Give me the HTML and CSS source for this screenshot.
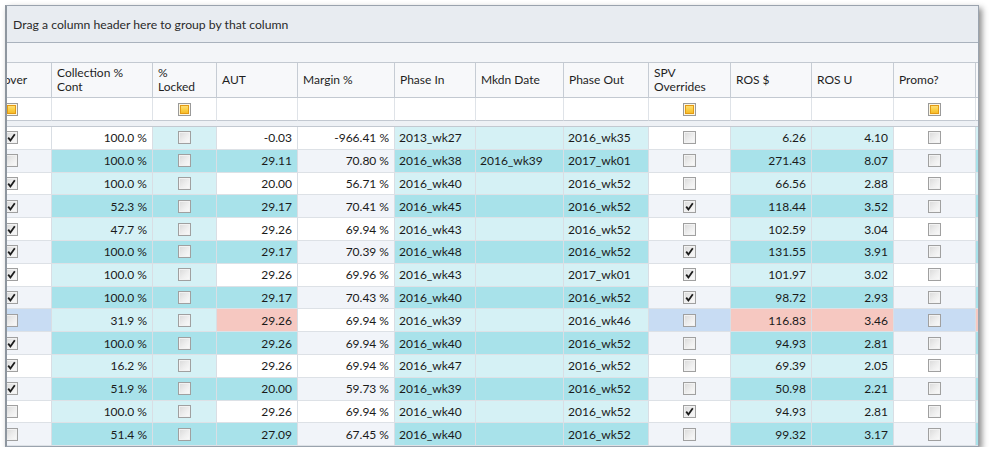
FILE: index.html
```
<!DOCTYPE html>
<html>
<head>
<meta charset="utf-8">
<link rel="stylesheet" href="styles.css">
</head>
<body>
<div class="win">
  <div class="group-panel">Drag a column header here to group by that column</div>
  <div class="strip"></div>
  <div class="row head">
    <div class="h c0"><div class="c0i txt">Carryover</div></div>
    <div class="h">Collection %<br>Cont</div>
    <div class="h">%<br>Locked</div>
    <div class="h">AUT</div>
    <div class="h">Margin %</div>
    <div class="h">Phase In</div>
    <div class="h">Mkdn Date</div>
    <div class="h">Phase Out</div>
    <div class="h">SPV<br>Overrides</div>
    <div class="h">ROS $</div>
    <div class="h">ROS U</div>
    <div class="h">Promo?</div>
    <div class="h last"></div>
  </div>
  <div class="row filter">
    <div class="f c0"><div class="c0i"><span class="cb ind"></span></div></div>
    <div class="f"></div>
    <div class="f m"><span class="cb ind"></span></div>
    <div class="f"></div>
    <div class="f"></div>
    <div class="f"></div>
    <div class="f"></div>
    <div class="f"></div>
    <div class="f m"><span class="cb ind"></span></div>
    <div class="f"></div>
    <div class="f"></div>
    <div class="f m"><span class="cb ind"></span></div>
    <div class="f last"></div>
  </div>
  <div class="sep"></div>
  <div class="body">
    <div class="row">
      <div class="c c0 p"><div class="c0i"><span class="cb on"><svg viewBox="0 0 11 11"><path d="M2.2 5.6L4.4 8.4L8.8 2.2"/></svg></span></div></div>
      <div class="c r cy focus">100.0 %</div>
      <div class="c m cy"><span class="cb"></span></div>
      <div class="c r au">-0.03</div>
      <div class="c r p">-966.41 %</div>
      <div class="c cy">2013_wk27</div>
      <div class="c cy"></div>
      <div class="c cy">2016_wk35</div>
      <div class="c m p"><span class="cb"></span></div>
      <div class="c r cy">6.26</div>
      <div class="c r cy">4.10</div>
      <div class="c m p"><span class="cb"></span></div>
      <div class="c cy last"></div>
    </div>
    <div class="row">
      <div class="c c0 p"><div class="c0i"><span class="cb"></span></div></div>
      <div class="c r cy">100.0 %</div>
      <div class="c m cy"><span class="cb"></span></div>
      <div class="c r au">29.11</div>
      <div class="c r p">70.80 %</div>
      <div class="c cy">2016_wk38</div>
      <div class="c cy">2016_wk39</div>
      <div class="c cy">2017_wk01</div>
      <div class="c m p"><span class="cb"></span></div>
      <div class="c r cy">271.43</div>
      <div class="c r cy">8.07</div>
      <div class="c m p"><span class="cb"></span></div>
      <div class="c cy last"></div>
    </div>
    <div class="row">
      <div class="c c0 p"><div class="c0i"><span class="cb on"><svg viewBox="0 0 11 11"><path d="M2.2 5.6L4.4 8.4L8.8 2.2"/></svg></span></div></div>
      <div class="c r cy">100.0 %</div>
      <div class="c m cy"><span class="cb"></span></div>
      <div class="c r au">20.00</div>
      <div class="c r p">56.71 %</div>
      <div class="c cy">2016_wk40</div>
      <div class="c cy"></div>
      <div class="c cy">2016_wk52</div>
      <div class="c m p"><span class="cb"></span></div>
      <div class="c r cy">66.56</div>
      <div class="c r cy">2.88</div>
      <div class="c m p"><span class="cb"></span></div>
      <div class="c cy last"></div>
    </div>
    <div class="row">
      <div class="c c0 p"><div class="c0i"><span class="cb on"><svg viewBox="0 0 11 11"><path d="M2.2 5.6L4.4 8.4L8.8 2.2"/></svg></span></div></div>
      <div class="c r cy">52.3 %</div>
      <div class="c m cy"><span class="cb"></span></div>
      <div class="c r au">29.17</div>
      <div class="c r p">70.41 %</div>
      <div class="c cy">2016_wk45</div>
      <div class="c cy"></div>
      <div class="c cy">2016_wk52</div>
      <div class="c m p"><span class="cb on"><svg viewBox="0 0 11 11"><path d="M2.2 5.6L4.4 8.4L8.8 2.2"/></svg></span></div>
      <div class="c r cy">118.44</div>
      <div class="c r cy">3.52</div>
      <div class="c m p"><span class="cb"></span></div>
      <div class="c cy last"></div>
    </div>
    <div class="row">
      <div class="c c0 p"><div class="c0i"><span class="cb on"><svg viewBox="0 0 11 11"><path d="M2.2 5.6L4.4 8.4L8.8 2.2"/></svg></span></div></div>
      <div class="c r cy">47.7 %</div>
      <div class="c m cy"><span class="cb"></span></div>
      <div class="c r au">29.26</div>
      <div class="c r p">69.94 %</div>
      <div class="c cy">2016_wk43</div>
      <div class="c cy"></div>
      <div class="c cy">2016_wk52</div>
      <div class="c m p"><span class="cb"></span></div>
      <div class="c r cy">102.59</div>
      <div class="c r cy">3.04</div>
      <div class="c m p"><span class="cb"></span></div>
      <div class="c cy last"></div>
    </div>
    <div class="row">
      <div class="c c0 p"><div class="c0i"><span class="cb on"><svg viewBox="0 0 11 11"><path d="M2.2 5.6L4.4 8.4L8.8 2.2"/></svg></span></div></div>
      <div class="c r cy">100.0 %</div>
      <div class="c m cy"><span class="cb"></span></div>
      <div class="c r au">29.17</div>
      <div class="c r p">70.39 %</div>
      <div class="c cy">2016_wk48</div>
      <div class="c cy"></div>
      <div class="c cy">2016_wk52</div>
      <div class="c m p"><span class="cb on"><svg viewBox="0 0 11 11"><path d="M2.2 5.6L4.4 8.4L8.8 2.2"/></svg></span></div>
      <div class="c r cy">131.55</div>
      <div class="c r cy">3.91</div>
      <div class="c m p"><span class="cb"></span></div>
      <div class="c cy last"></div>
    </div>
    <div class="row">
      <div class="c c0 p"><div class="c0i"><span class="cb on"><svg viewBox="0 0 11 11"><path d="M2.2 5.6L4.4 8.4L8.8 2.2"/></svg></span></div></div>
      <div class="c r cy">100.0 %</div>
      <div class="c m cy"><span class="cb"></span></div>
      <div class="c r au">29.26</div>
      <div class="c r p">69.96 %</div>
      <div class="c cy">2016_wk43</div>
      <div class="c cy"></div>
      <div class="c cy">2017_wk01</div>
      <div class="c m p"><span class="cb on"><svg viewBox="0 0 11 11"><path d="M2.2 5.6L4.4 8.4L8.8 2.2"/></svg></span></div>
      <div class="c r cy">101.97</div>
      <div class="c r cy">3.02</div>
      <div class="c m p"><span class="cb"></span></div>
      <div class="c cy last"></div>
    </div>
    <div class="row">
      <div class="c c0 p"><div class="c0i"><span class="cb on"><svg viewBox="0 0 11 11"><path d="M2.2 5.6L4.4 8.4L8.8 2.2"/></svg></span></div></div>
      <div class="c r cy">100.0 %</div>
      <div class="c m cy"><span class="cb"></span></div>
      <div class="c r au">29.17</div>
      <div class="c r p">70.43 %</div>
      <div class="c cy">2016_wk40</div>
      <div class="c cy"></div>
      <div class="c cy">2016_wk52</div>
      <div class="c m p"><span class="cb on"><svg viewBox="0 0 11 11"><path d="M2.2 5.6L4.4 8.4L8.8 2.2"/></svg></span></div>
      <div class="c r cy">98.72</div>
      <div class="c r cy">2.93</div>
      <div class="c m p"><span class="cb"></span></div>
      <div class="c cy last"></div>
    </div>
    <div class="row">
      <div class="c c0 p sel"><div class="c0i"><span class="cb"></span></div></div>
      <div class="c r cy">31.9 %</div>
      <div class="c m cy"><span class="cb"></span></div>
      <div class="c r au warn">29.26</div>
      <div class="c r p">69.94 %</div>
      <div class="c cy">2016_wk39</div>
      <div class="c cy"></div>
      <div class="c cy">2016_wk46</div>
      <div class="c m p sel"><span class="cb"></span></div>
      <div class="c r cy warn">116.83</div>
      <div class="c r cy warn">3.46</div>
      <div class="c m p sel"><span class="cb"></span></div>
      <div class="c cy last warn"></div>
    </div>
    <div class="row">
      <div class="c c0 p"><div class="c0i"><span class="cb on"><svg viewBox="0 0 11 11"><path d="M2.2 5.6L4.4 8.4L8.8 2.2"/></svg></span></div></div>
      <div class="c r cy">100.0 %</div>
      <div class="c m cy"><span class="cb"></span></div>
      <div class="c r au">29.26</div>
      <div class="c r p">69.94 %</div>
      <div class="c cy">2016_wk40</div>
      <div class="c cy"></div>
      <div class="c cy">2016_wk52</div>
      <div class="c m p"><span class="cb"></span></div>
      <div class="c r cy">94.93</div>
      <div class="c r cy">2.81</div>
      <div class="c m p"><span class="cb"></span></div>
      <div class="c cy last"></div>
    </div>
    <div class="row">
      <div class="c c0 p"><div class="c0i"><span class="cb on"><svg viewBox="0 0 11 11"><path d="M2.2 5.6L4.4 8.4L8.8 2.2"/></svg></span></div></div>
      <div class="c r cy">16.2 %</div>
      <div class="c m cy"><span class="cb"></span></div>
      <div class="c r au">29.26</div>
      <div class="c r p">69.94 %</div>
      <div class="c cy">2016_wk47</div>
      <div class="c cy"></div>
      <div class="c cy">2016_wk52</div>
      <div class="c m p"><span class="cb"></span></div>
      <div class="c r cy">69.39</div>
      <div class="c r cy">2.05</div>
      <div class="c m p"><span class="cb"></span></div>
      <div class="c cy last"></div>
    </div>
    <div class="row">
      <div class="c c0 p"><div class="c0i"><span class="cb on"><svg viewBox="0 0 11 11"><path d="M2.2 5.6L4.4 8.4L8.8 2.2"/></svg></span></div></div>
      <div class="c r cy">51.9 %</div>
      <div class="c m cy"><span class="cb"></span></div>
      <div class="c r au">20.00</div>
      <div class="c r p">59.73 %</div>
      <div class="c cy">2016_wk39</div>
      <div class="c cy"></div>
      <div class="c cy">2016_wk52</div>
      <div class="c m p"><span class="cb"></span></div>
      <div class="c r cy">50.98</div>
      <div class="c r cy">2.21</div>
      <div class="c m p"><span class="cb"></span></div>
      <div class="c cy last"></div>
    </div>
    <div class="row">
      <div class="c c0 p"><div class="c0i"><span class="cb"></span></div></div>
      <div class="c r cy">100.0 %</div>
      <div class="c m cy"><span class="cb"></span></div>
      <div class="c r au">29.26</div>
      <div class="c r p">69.94 %</div>
      <div class="c cy">2016_wk40</div>
      <div class="c cy"></div>
      <div class="c cy">2016_wk52</div>
      <div class="c m p"><span class="cb on"><svg viewBox="0 0 11 11"><path d="M2.2 5.6L4.4 8.4L8.8 2.2"/></svg></span></div>
      <div class="c r cy">94.93</div>
      <div class="c r cy">2.81</div>
      <div class="c m p"><span class="cb"></span></div>
      <div class="c cy last"></div>
    </div>
    <div class="row">
      <div class="c c0 p"><div class="c0i"><span class="cb"></span></div></div>
      <div class="c r cy">51.4 %</div>
      <div class="c m cy"><span class="cb"></span></div>
      <div class="c r au">27.09</div>
      <div class="c r p">67.45 %</div>
      <div class="c cy">2016_wk40</div>
      <div class="c cy"></div>
      <div class="c cy">2016_wk52</div>
      <div class="c m p"><span class="cb"></span></div>
      <div class="c r cy">99.32</div>
      <div class="c r cy">3.17</div>
      <div class="c m p"><span class="cb"></span></div>
      <div class="c cy last"></div>
    </div>
    <div class="row">
      <div class="c c0 p"><div class="c0i"><span class="cb"></span></div></div>
      <div class="c r cy"></div>
      <div class="c m cy"><span class="cb"></span></div>
      <div class="c r au"></div>
      <div class="c r p"></div>
      <div class="c cy"></div>
      <div class="c cy"></div>
      <div class="c cy"></div>
      <div class="c m p"><span class="cb"></span></div>
      <div class="c r cy"></div>
      <div class="c r cy"></div>
      <div class="c m p"><span class="cb"></span></div>
      <div class="c cy last"></div>
    </div>
  </div>
</div>
</body>
</html>
```

FILE: styles.css
```
html, body {
  margin: 0;
  padding: 0;
  background: #ffffff;
}
body {
  padding: 5px 0 0 5px;
  font-family: Lato, "Open Sans", sans-serif;
  font-size: 12px;
  color: #1a1a1a;
}
.win {
  box-sizing: border-box;
  width: 974px;
  height: 442px;
  border: 1px solid #9aa3ae;
  border-left: 2px solid #8e969f;
  overflow: hidden;
  background: #fff;
  box-shadow: 3px 3px 6px rgba(0, 0, 0, 0.45);
}
.group-panel {
  height: 36px;
  box-sizing: content-box;
  border-bottom: 1px solid #a9b2bd;
  background: #e8ecf1;
  padding-left: 6px;
  display: flex;
  align-items: center;
  color: #2a2a2a;
  font-size: 12.2px;
}
.strip {
  height: 19px;
  background: #f3f5f8;
  border-bottom: 1px solid #c3c9d1;
}
.row {
  display: grid;
  grid-template-columns: 45px 101px 64px 81px 97px 81px 88px 85px 82px 81px 82px 82px 1fr;
}
.h {
  box-sizing: border-box;
  height: 35px;
  border-right: 1px solid #c6ccd4;
  border-bottom: 1px solid #c3c9d1;
  background: #f7f8fa;
  padding: 0 5px;
  display: flex;
  align-items: center;
  line-height: 14.5px;
  color: #1e1e1e;
  overflow: hidden;
  white-space: nowrap;
}
.f {
  box-sizing: border-box;
  height: 23px;
  border-right: 1px solid #dfe3e8;
  border-bottom: 1px solid #c3c9d1;
  background: #fff;
  display: flex;
  align-items: center;
  overflow: hidden;
}
.sep {
  height: 5px;
  background: #eef1f5;
  border-bottom: 1px solid #c3c9d1;
}
.c {
  box-sizing: border-box;
  height: 22.8px;
  border-right: 1px solid #d9dee4;
  border-bottom: 1px solid #dde1e6;
  padding: 0 4px;
  display: flex;
  align-items: center;
  overflow: hidden;
  white-space: nowrap;
}
.r {
  justify-content: flex-end;
  padding-right: 5px;
}
.m {
  justify-content: center;
}
.c0 {
  padding: 0;
}
.c0i {
  flex: none;
  width: 82px;
  margin-left: -37px;
  display: flex;
  justify-content: center;
  align-items: center;
}
.c0i.txt {
  justify-content: flex-start;
  padding-left: 5px;
  box-sizing: border-box;
}
.last {
  border-right: none;
}

/* column colours */
.body .row:nth-child(odd) .p { background: #ffffff; }
.body .row:nth-child(even) .p { background: #f1f4f9; }
.body .row:nth-child(odd) .cy { background: #d5f1f5; }
.body .row:nth-child(even) .cy { background: #a8e2ea; }
.body .row:nth-child(odd) .au { background: #ffffff; }
.body .row:nth-child(even) .au { background: #a8e2ea; }
.body .row .c.focus { background: #ffffff; }
.body .row .c.sel { background: #c8dcf3; }
.body .row .c.warn { background: #f6c8c1; }

/* checkboxes */
.cb {
  box-sizing: border-box;
  width: 13px;
  height: 13px;
  border: 1px solid #a0a0a0;
  background: linear-gradient(135deg, #d9d9d9 0%, #eeeeee 55%, #fbfbfb 100%);
  box-shadow: inset 0 0 0 1px #f2f2f2;
  display: inline-flex;
  align-items: center;
  justify-content: center;
  flex: none;
}
.cb svg {
  width: 11px;
  height: 11px;
  fill: none;
  stroke: #1c1c1c;
  stroke-width: 1.8;
}
.cb.ind {
  border: 1px solid #9a9a9a;
  background: linear-gradient(180deg, #ffe58c 0%, #fbcf45 50%, #f4b21a 100%);
  box-shadow: inset 0 0 0 1px #fdf6e0, inset 0 0 0 2px #e29a14;
}
```
